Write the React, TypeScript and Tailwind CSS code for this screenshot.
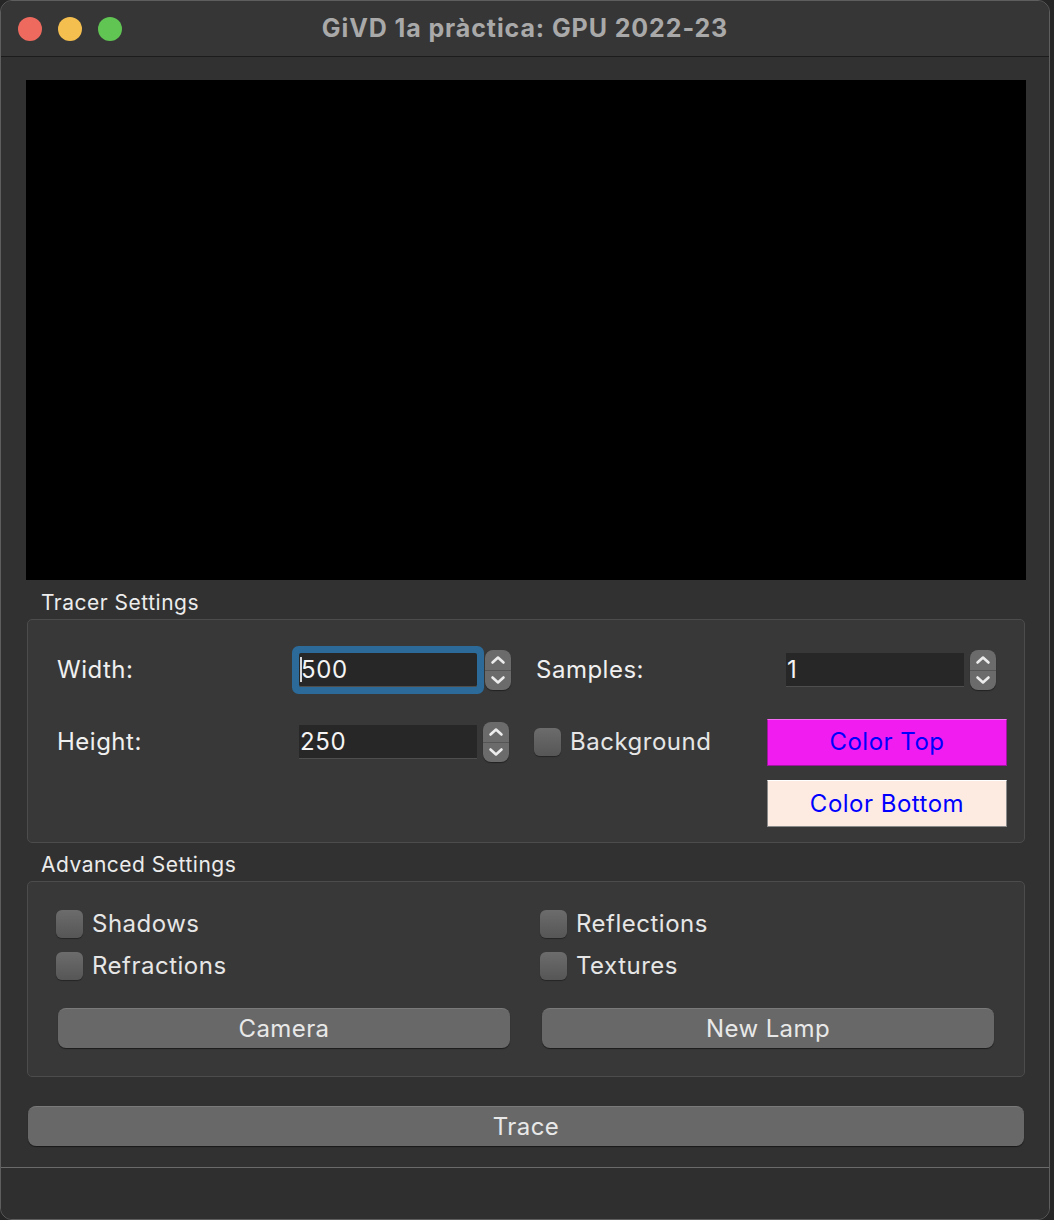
import React from "react";

const font = { fontFamily: 'Inter, "Noto Sans", "Liberation Sans", sans-serif' };

function Arrows({ h = 40 }: { h?: number }) {
  return (
    <div
      className="w-[26px] rounded-[8px] bg-[#6b6b6b] flex flex-col overflow-hidden shadow-[0_1px_1px_rgba(0,0,0,0.4)]"
      style={{ height: h }}
    >
      <div className="flex-1 flex items-center justify-center border-b border-[#555]">
        <svg width="16" height="10" viewBox="0 0 16 10">
          <path d="M2.5 7.5 L8 2.5 L13.5 7.5" fill="none" stroke="#ececec" strokeWidth="2.6" strokeLinecap="round" strokeLinejoin="round" />
        </svg>
      </div>
      <div className="flex-1 flex items-center justify-center">
        <svg width="16" height="10" viewBox="0 0 16 10">
          <path d="M2.5 2.5 L8 7.5 L13.5 2.5" fill="none" stroke="#ececec" strokeWidth="2.6" strokeLinecap="round" strokeLinejoin="round" />
        </svg>
      </div>
    </div>
  );
}

function Field({ value, focus = false, w = 178 }: { value: string; focus?: boolean; w?: number }) {
  return (
    <div
      className={
        "h-[34px] bg-[#272727] border-b border-[#4e4e4e] flex items-center pl-[1px] text-[24px] tracking-[0.6px] text-[#f4f4f4] " +
        (focus ? "rounded-[2px] shadow-[0_0_0_7px_#2b6a99]" : "")
      }
      style={{ width: w }}
    >
      {focus && <span className="w-[2px] h-[25px] bg-[#d8d8d8] mr-[-1px]" />}
      <span className="leading-none">{value}</span>
    </div>
  );
}

function Check({ label }: { label: string }) {
  return (
    <div className="flex items-center h-[28px]">
      <div className="w-[27px] h-[28px] rounded-[6px] bg-gradient-to-b from-[#6c6c6c] to-[#565656] shadow-[0_1px_1px_rgba(0,0,0,0.35)]" />
      <span className="ml-[9px] text-[24px] tracking-[0.5px] text-[#e6e6e6] leading-none">{label}</span>
    </div>
  );
}

function Btn({ label, w }: { label: string; w: number }) {
  return (
    <div
      className="h-[40px] rounded-[8px] bg-[#686868] border-t border-[#7a7a7a] shadow-[0_1px_1px_rgba(0,0,0,0.5)] flex items-center justify-center text-[24px] tracking-[0.4px] text-[#e8e8e8]"
      style={{ width: w }}
    >
      {label}
    </div>
  );
}

export default function App() {
  return (
    <div className="w-[1054px] h-[1220px] bg-[#262626] overflow-hidden" style={font}>
      <div className="w-[1050px] h-[1220px] rounded-[12px] border border-[#5e5e5e] overflow-hidden flex flex-col bg-[#313131]">
        {/* Title bar */}
        <div className="h-[56px] shrink-0 bg-[#363636] border-b border-[#1c1c1c] relative flex items-center">
          <div className="flex items-center gap-[16px] pl-[17px]">
            <div className="w-[24px] h-[24px] rounded-full bg-[#ee6a5f]" />
            <div className="w-[24px] h-[24px] rounded-full bg-[#f5bf4f]" />
            <div className="w-[24px] h-[24px] rounded-full bg-[#61c554]" />
          </div>
          <div className="absolute inset-0 flex items-center justify-center text-[25px] font-bold text-[#a9a9a9] tracking-[0.9px]">
            GiVD 1a pràctica: GPU 2022-23
          </div>
        </div>

        {/* Content */}
        <div className="flex-1 flex flex-col pl-[25px] pt-[23px]">
          <div className="w-[1000px] h-[500px] bg-black" />

          <div className="mt-[11px] ml-[15px] h-[24px] flex items-center text-[21px] tracking-[0.5px] text-[#ececec]">Tracer Settings</div>

          <div className="mt-[4px] ml-[1px] w-[998px] h-[224px] rounded-[5px] border border-[#4c4c4c] bg-[#383838] pt-[26px] pl-[29px]">
            {/* Row 1 */}
            <div className="flex items-center h-[48px]">
              <div className="w-[242px] text-[24px] tracking-[0.5px] text-[#f0f0f0]">Width:</div>
              <Field value="500" focus />
              <div className="ml-[8px]">
                <Arrows />
              </div>
              <div className="ml-[25px] w-[250px] text-[24px] tracking-[0.5px] text-[#f0f0f0]">Samples:</div>
              <Field value="1" />
              <div className="ml-[6px]">
                <Arrows />
              </div>
            </div>
            {/* Row 2 */}
            <div className="flex items-center h-[48px] mt-[24px]">
              <div className="w-[242px] text-[24px] tracking-[0.5px] text-[#f0f0f0]">Height:</div>
              <Field value="250" />
              <div className="ml-[6px]">
                <Arrows />
              </div>
              <div className="ml-[25px] w-[233px]">
                <Check label="Background" />
              </div>
              <div className="w-[240px] h-[47px] bg-[#f01cf0] border border-[#a0169f] border-t-[#f46cf4] flex items-center justify-center text-[24px] tracking-[0.5px] text-[#0000ff]">
                Color Top
              </div>
            </div>
            {/* Row 3 */}
            <div className="flex h-[48px] mt-[14px] pl-[710px]">
              <div className="w-[240px] h-[47px] bg-[#fdebe2] border border-[#8a8a8a] border-t-[#ffffff] flex items-center justify-center text-[24px] tracking-[0.5px] text-[#0000ff]">
                Color Bottom
              </div>
            </div>
          </div>

          <div className="mt-[10px] ml-[15px] h-[24px] flex items-center text-[21px] tracking-[0.5px] text-[#ececec]">Advanced Settings</div>

          <div className="mt-[4px] ml-[1px] w-[998px] h-[196px] rounded-[5px] border border-[#4c4c4c] bg-[#383838] pt-[28px] pl-[28px]">
            <div className="flex">
              <div className="w-[484px] flex flex-col gap-[14px]">
                <Check label="Shadows" />
                <Check label="Refractions" />
              </div>
              <div className="flex flex-col gap-[14px]">
                <Check label="Reflections" />
                <Check label="Textures" />
              </div>
            </div>
            <div className="flex mt-[28px] pl-[2px] gap-[32px]">
              <Btn label="Camera" w={452} />
              <Btn label="New Lamp" w={452} />
            </div>
          </div>

          <div className="mt-[29px] ml-[2px]">
            <Btn label="Trace" w={996} />
          </div>
        </div>

        <div className="h-[52px] shrink-0 border-t border-[#6a6a6a] bg-[#2f2f2f]" />
      </div>
    </div>
  );
}
